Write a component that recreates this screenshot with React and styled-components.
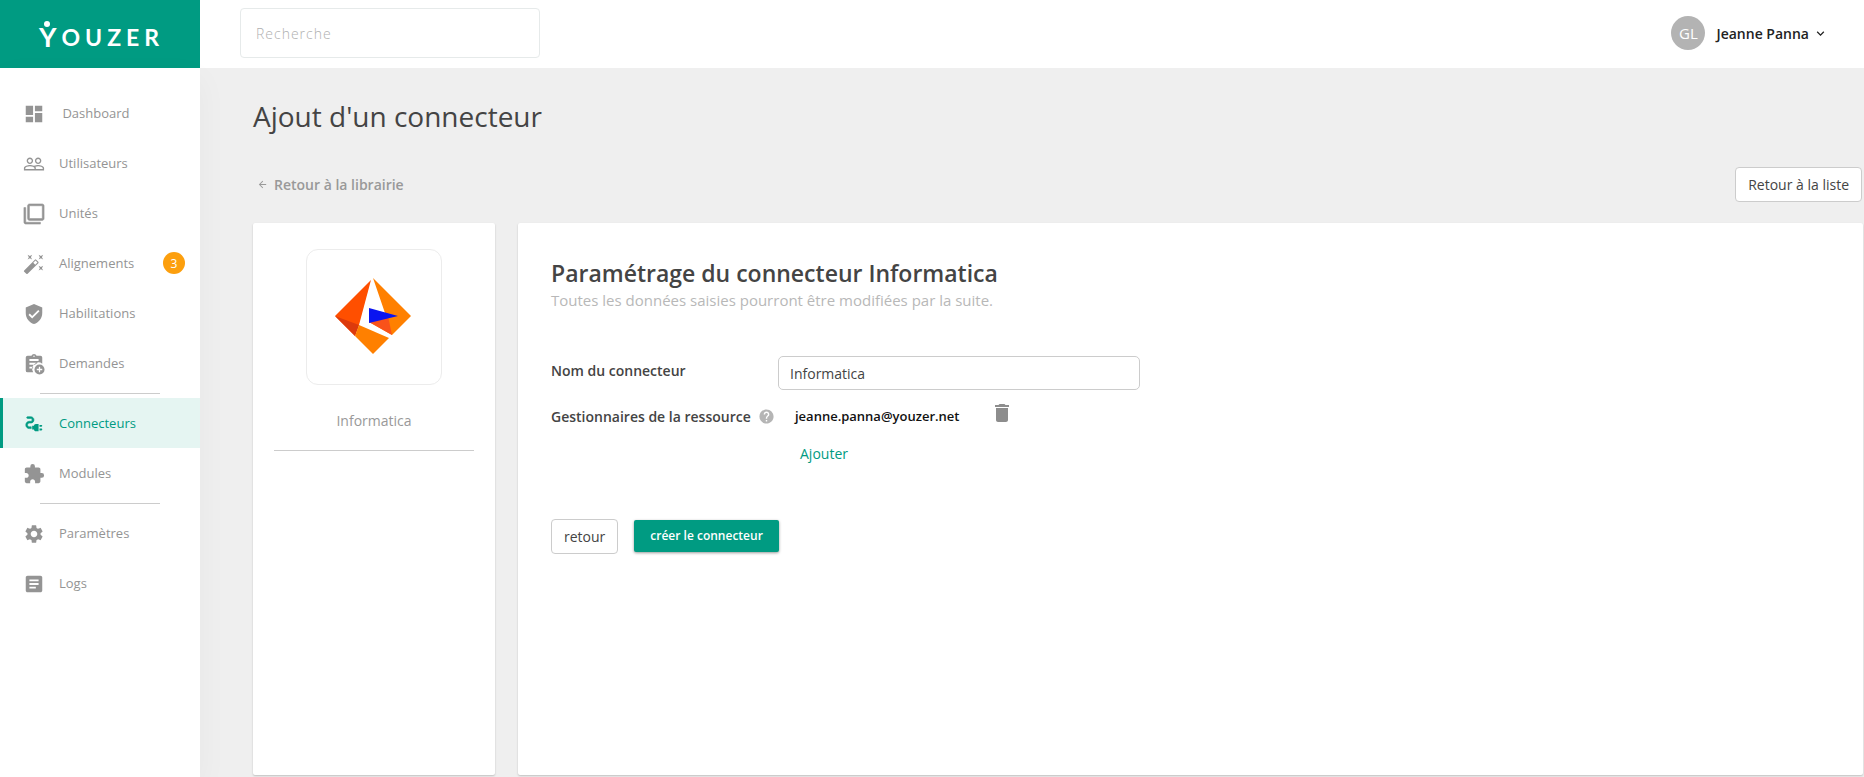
import React, { useState } from "react";
import styled, { createGlobalStyle, css, ThemeProvider } from "styled-components";
import {
  MdArrowBack,
  MdArticle,
  MdAutoFixHigh,
  MdDashboard,
  MdDelete,
  MdElectricalServices,
  MdExtension,
  MdFilterNone,
  MdHelp,
  MdKeyboardArrowDown,
  MdPeopleOutline,
  MdSettings,
  MdVerifiedUser,
} from "react-icons/md";

const theme = {
  primary: "#009b82",
  primaryLight: "#e5f5f2",
  body: "#efefef",
  text: "#444",
  muted: "#949494",
  border: "#ccc",
  badge: "#fc9f0e",
};

const RequestIcon = ({ size }) => (
  <svg width={size} height={size} viewBox="0 0 24 24" fill="currentColor">
    <path
      fillRule="evenodd"
      d="M5 3 H9.2 A3 3 0 0 1 14.8 3 H19 A2 2 0 0 1 21 5 V11.6 A7 7 0 0 0 11.1 21 H5 A2 2 0 0 1 3 19 V5 A2 2 0 0 1 5 3 Z M12 2.7 A.8 .8 0 1 0 12 4.3 A.8 .8 0 1 0 12 2.7 Z M7 6.5 V8.7 H17 V6.5 Z M7 10.7 V12.7 H13 L16 10.7 Z M7 14.9 V17 H11 V14.9 Z"
    />
    <path
      fillRule="evenodd"
      d="M18 12.5 A5.5 5.5 0 1 0 18 23.5 A5.5 5.5 0 1 0 18 12.5 Z M17.3 15 H18.7 V17.3 H21 V18.7 H18.7 V21 H17.3 V18.7 H15 V17.3 H17.3 Z"
    />
  </svg>
);

const navGroups = [
  [
    { label: "\u00a0Dashboard", icon: MdDashboard },
    { label: "Utilisateurs", icon: MdPeopleOutline },
    { label: "Unités", icon: MdFilterNone, bold: true },
    { label: "Alignements", icon: MdAutoFixHigh, count: 3 },
    { label: "Habilitations", icon: MdVerifiedUser },
    { label: "Demandes", icon: RequestIcon },
  ],
  [
    {
      label: "Connecteurs",
      icon: MdElectricalServices,
      bold: true,
      active: true,
    },
    { label: "Modules", icon: MdExtension },
  ],
  [
    { label: "Paramètres", icon: MdSettings },
    { label: "Logs", icon: MdArticle },
  ],
];

const InformaticaLogo = () => (
  <svg width="78" height="78" viewBox="0 0 78 78" aria-label="Informatica">
    <path d="M36 2 L0 38 L20 58 L24 47 Z" fill="#ff4f00" />
    <path d="M0 38 L24 47 L20 58 Z" fill="#dc3a0c" />
    <path d="M24 47 L54 60 L38 76 L20 58 Z" fill="#ff8000" />
    <path d="M38 0 L76 38 L57 57 L34 44 L51 38 Z" fill="#ff8000" />
    <path d="M34 44 L53 38 L57 57 Z" fill="#f9521a" />
    <path d="M34 30 L63 38 L34 45 Z" fill="#0a14f0" />
  </svg>
);

const Sidebar = () => (
  <Nav>
    {navGroups.map((group, i) => (
      <NavGroup key={i}>
        {group.map(({ label, icon: Icon, count, bold, active }) => (
          <li key={label}>
            <NavLink href="#" $active={active} $bold={bold}>
              <Icon size={22} />
              <span>{label}</span>
              {count && <Badge>{count}</Badge>}
            </NavLink>
          </li>
        ))}
      </NavGroup>
    ))}
  </Nav>
);

const Header = () => (
  <TopBar>
    <Brand href="#">
      <BrandInitial>Y</BrandInitial>OUZER
    </Brand>
    <Search type="search" placeholder="Recherche" aria-label="Recherche" />
    <UserMenu type="button">
      <Avatar>GL</Avatar>
      Jeanne Panna
      <MdKeyboardArrowDown size={15} />
    </UserMenu>
  </TopBar>
);

const ConnectorForm = () => {
  const [name, setName] = useState("Informatica");
  return (
    <form onSubmit={(e) => e.preventDefault()}>
      <Fields>
        <Label htmlFor="name">Nom du connecteur</Label>
        <Input id="name" value={name} onChange={(e) => setName(e.target.value)} />
        <Label as="span">
          Gestionnaires de la ressource
          <MdHelp size={17} />
        </Label>
        <Managers>
          <Manager>
            jeanne.panna@youzer.net
            <IconButton type="button" aria-label="Supprimer">
              <MdDelete size={24} />
            </IconButton>
          </Manager>
          <AddLink href="#">Ajouter</AddLink>
        </Managers>
      </Fields>
      <Actions>
        <Button type="button">retour</Button>
        <SubmitButton type="submit">créer le connecteur</SubmitButton>
      </Actions>
    </form>
  );
};

const App = () => {
  return (
    <ThemeProvider theme={theme}>
      <GlobalStyle />
      <Page>
        <Header />
        <Sidebar />
        <Main>
          <Title>Ajout d'un connecteur</Title>
          <Toolbar>
            <BackLink href="#">
              <MdArrowBack size={11} />
              Retour à la librairie
            </BackLink>
            <Button type="button">Retour à la liste</Button>
          </Toolbar>
          <Cards>
            <ConnectorCard>
              <LogoBox>
                <InformaticaLogo />
              </LogoBox>
              <ConnectorName>Informatica</ConnectorName>
            </ConnectorCard>
            <SettingsCard>
              <CardTitle>Paramétrage du connecteur Informatica</CardTitle>
              <Hint>
                Toutes les données saisies pourront être modifiées par la suite.
              </Hint>
              <ConnectorForm />
            </SettingsCard>
          </Cards>
        </Main>
      </Page>
    </ThemeProvider>
  );
};

export default App;

const GlobalStyle = createGlobalStyle`
  * {
    box-sizing: border-box;
  }
  body {
    margin: 0;
    background: ${({ theme }) => theme.body};
    color: ${({ theme }) => theme.text};
    font-family: "Open Sans", "Noto Sans", sans-serif;
    font-size: 14px;
  }
  a {
    text-decoration: none;
  }
  button, input {
    font: inherit;
  }
`;

const Page = styled.div`
  display: grid;
  grid-template-columns: 200px 1fr;
  grid-template-rows: 68px 1fr;
  min-height: 100vh;
`;

const TopBar = styled.header`
  grid-column: 1 / -1;
  display: flex;
  align-items: center;
  padding-bottom: 2px;
  background: #fff;
`;

const Brand = styled.a`
  display: flex;
  align-items: center;
  width: 200px;
  height: 68px;
  margin-bottom: -2px;
  padding: 5px 0 0 39px;
  background: ${({ theme }) => theme.primary};
  color: #fff;
  font-family: Lato, sans-serif;
  font-size: 23px;
  font-weight: 700;
  line-height: 24px;
  letter-spacing: 5px;
`;

const BrandInitial = styled.span`
  position: relative;
  font-size: 27px;
  &::before {
    content: "";
    position: absolute;
    top: -4px;
    left: 5px;
    width: 6px;
    height: 6px;
    border-radius: 50%;
    background: #fff;
  }
`;

const Search = styled.input`
  width: 300px;
  height: 50px;
  margin-left: 40px;
  padding: 0 15px;
  border: 1px solid #e6eaea;
  border-radius: 4px;
  outline: none;
  letter-spacing: 1px;
  &::placeholder {
    color: #b0b0b0;
    font-weight: 300;
  }
`;

const UserMenu = styled.button`
  display: flex;
  align-items: center;
  margin-left: auto;
  padding: 0 36px 0 0;
  border: 0;
  background: none;
  color: #222;
  font-weight: 600;
  svg {
    margin-left: 4px;
  }
`;

const Avatar = styled.span`
  display: grid;
  place-items: center;
  width: 34px;
  height: 34px;
  margin-right: 11px;
  border-radius: 50%;
  background: #b3b3b3;
  color: #fff;
  font-size: 15px;
  font-weight: 400;
`;

const Nav = styled.nav`
  padding-top: 20px;
  background: #fff;
  box-shadow: 0 10px 30px rgba(0, 0, 0, 0.04);
`;

const NavGroup = styled.ul`
  margin: 0;
  padding: 0;
  list-style: none;
  & + &::before {
    content: "";
    display: block;
    width: 120px;
    height: 1px;
    margin: 5px auto 4px;
    background: ${({ theme }) => theme.border};
  }
`;

const NavLink = styled.a`
  display: flex;
  align-items: center;
  gap: 14px;
  height: 50px;
  padding: 0 15px 0 23px;
  color: ${({ theme }) => theme.muted};
  font-size: 13px;
  svg {
    margin-top: 2px;
  }
  ${({ $bold }) =>
    $bold &&
    css`
      svg path:last-child {
        stroke: currentColor;
        stroke-width: 0.6px;
      }
    `}
  ${({ $active }) =>
    $active &&
    css`
      padding-left: 20px;
      border-left: 3px solid ${({ theme }) => theme.primary};
      background: ${({ theme }) => theme.primaryLight};
      color: ${({ theme }) => theme.primary};
    `}
`;

const Badge = styled.span`
  display: grid;
  place-items: center;
  width: 22px;
  height: 22px;
  margin-left: auto;
  border-radius: 50%;
  background: ${({ theme }) => theme.badge};
  color: #fff;
  font-size: 12px;
`;

const Main = styled.main`
  display: flex;
  flex-direction: column;
  padding: 29px 1px 2px 53px;
`;

const Title = styled.h1`
  margin: 0;
  font-size: 28px;
  font-weight: 400;
  line-height: 38px;
`;

const Toolbar = styled.div`
  display: flex;
  align-items: center;
  justify-content: space-between;
  margin-top: 32px;
  padding: 0 1px 0 4px;
`;

const BackLink = styled.a`
  display: flex;
  align-items: center;
  gap: 6px;
  color: #999;
  font-weight: 600;
`;

const Button = styled.button`
  height: 35px;
  padding: 0 12px;
  border: 1px solid ${({ theme }) => theme.border};
  border-radius: 4px;
  background: #fff;
  color: ${({ theme }) => theme.text};
  font-size: 14px;
`;

const Cards = styled.div`
  flex: 1;
  display: grid;
  grid-template-columns: 242px 1fr;
  gap: 23px;
  margin-top: 21px;
`;

const Card = styled.section`
  border-radius: 2px;
  background: #fff;
  box-shadow: 0 1px 2px rgba(0, 0, 0, 0.2);
`;

const ConnectorCard = styled(Card)`
  display: flex;
  flex-direction: column;
  align-items: center;
  padding: 26px 21px;
`;

const LogoBox = styled.div`
  display: grid;
  place-items: center;
  width: 136px;
  height: 136px;
  border: 1px solid #ececec;
  border-radius: 12px;
`;

const ConnectorName = styled.div`
  width: 100%;
  margin-top: 26px;
  padding-bottom: 19px;
  border-bottom: 1px solid ${({ theme }) => theme.border};
  color: #999;
  line-height: 20px;
  text-align: center;
`;

const SettingsCard = styled(Card)`
  padding: 33px;
`;

const CardTitle = styled.h2`
  margin: 0;
  font-size: 23px;
  font-weight: 600;
  line-height: 34px;
`;

const Hint = styled.p`
  margin: 0;
  color: #b8b8b8;
  font-size: 15px;
  line-height: 20px;
`;

const Fields = styled.div`
  display: grid;
  grid-template-columns: 227px 362px;
  row-gap: 12px;
  margin-top: 46px;
`;

const Label = styled.label`
  display: flex;
  align-items: center;
  gap: 7px;
  height: 28px;
  font-weight: 600;
  svg {
    color: #b5b5b5;
  }
`;

const Input = styled.input`
  height: 34px;
  padding: 0 11px;
  border: 1px solid ${({ theme }) => theme.border};
  border-radius: 5px;
  outline: none;
  color: ${({ theme }) => theme.text};
`;

const Managers = styled.div`
  padding-left: 17px;
`;

const Manager = styled.div`
  display: flex;
  align-items: center;
  gap: 30px;
  height: 28px;
  color: #111;
  font-size: 13px;
  font-weight: 600;
`;

const IconButton = styled.button`
  display: flex;
  padding: 0 0 6px;
  border: 0;
  background: none;
  color: #8d8d8d;
`;

const AddLink = styled.a`
  display: inline-block;
  margin-top: 14px;
  padding: 0 5px;
  color: ${({ theme }) => theme.primary};
  line-height: 20px;
`;

const Actions = styled.div`
  display: flex;
  align-items: center;
  gap: 16px;
  margin-top: 55px;
`;

const SubmitButton = styled.button`
  height: 32px;
  margin-bottom: 2px;
  padding: 0 16px;
  border: 0;
  border-radius: 2px;
  background: ${({ theme }) => theme.primary};
  box-shadow: 0 1px 3px rgba(0, 0, 0, 0.4);
  color: #fff;
  font-size: 12px;
  font-weight: 600;
`;
